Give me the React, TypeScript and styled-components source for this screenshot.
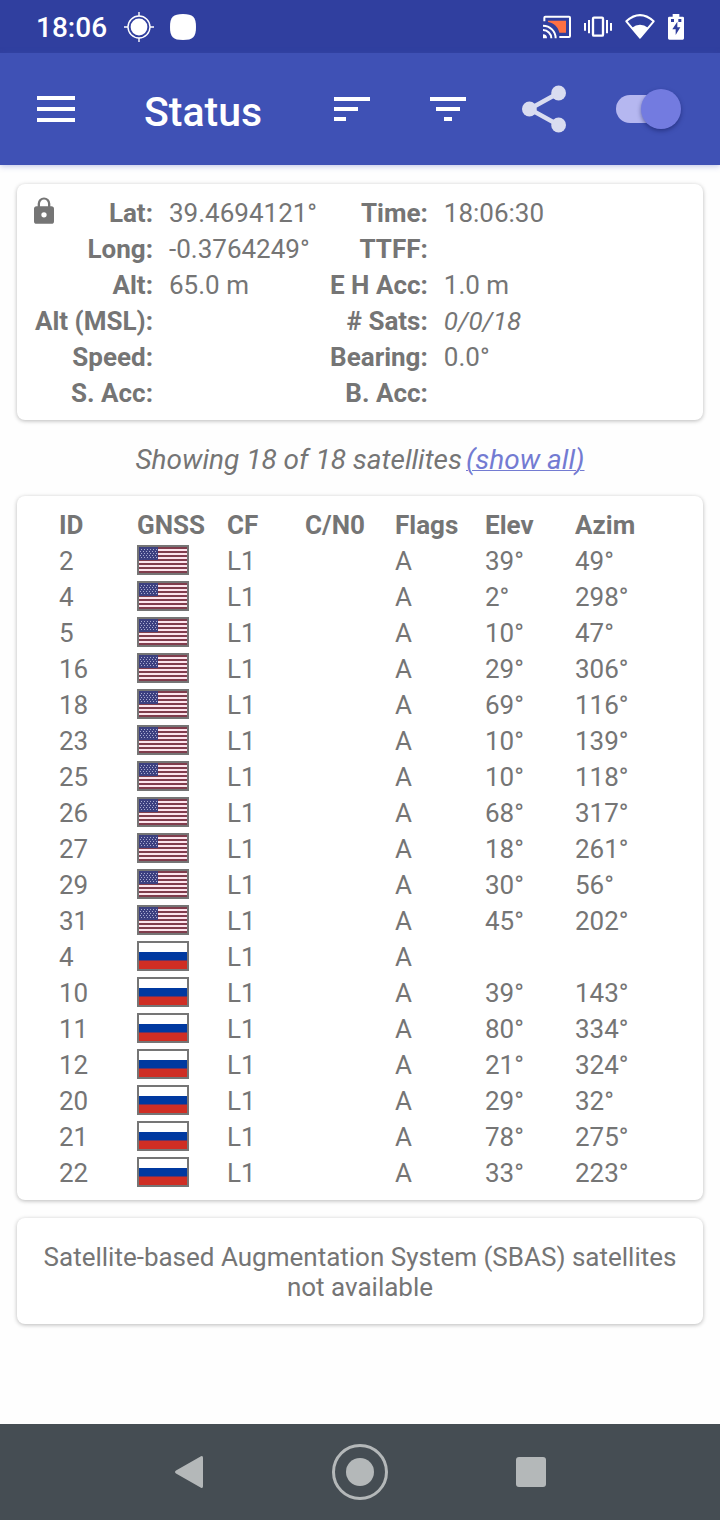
import React from "react";
import styled, { createGlobalStyle } from "styled-components";

const GlobalStyle = createGlobalStyle`
  *, *::before, *::after { box-sizing: border-box; }
  body {
    margin: 0;
    background: #fefefe;
    color: #757575;
    font-family: Roboto, "Liberation Sans", sans-serif;
    font-size: 26px;
    line-height: 36px;
  }
`;

const Screen = styled.div`
  display: flex;
  flex-direction: column;
  min-height: 100vh;
`;

const StatusBar = styled.div`
  display: flex;
  align-items: center;
  gap: 13px;
  height: 53px;
  padding: 0 36px;
  background: #303f9f;
  color: #fff;
`;

const Clock = styled.time`
  padding-top: 2px;
  font-size: 28px;
  font-weight: 500;
  margin-right: 4px;
`;

const Spacer = styled.span`
  flex: 1;
`;

const Toolbar = styled.header`
  display: flex;
  align-items: center;
  height: 112px;
  padding-right: 39px;
  background: #3f51b5;
  color: #fff;
  box-shadow: 0 1px 6px rgba(63, 81, 181, 0.35);
`;

const IconButton = styled.button<{ $width: number }>`
  display: flex;
  align-items: center;
  justify-content: center;
  width: ${(p) => p.$width}px;
  height: 96px;
  padding: 0;
  border: 0;
  background: none;
  color: inherit;
`;

const Title = styled.h1`
  flex: 1;
  margin: 0 0 0 32px;
  padding-top: 5px;
  font-size: 41px;
  font-weight: 500;
  line-height: 48px;
`;

const Switch = styled.input`
  appearance: none;
  position: relative;
  width: 65px;
  height: 40px;
  margin: 0 0 0 24px;

  &::before {
    content: "";
    position: absolute;
    inset: 6px 4px 6px 0;
    border-radius: 14px;
    background: #b5b7f0;
  }
  &::after {
    content: "";
    position: absolute;
    top: 0;
    left: 0;
    width: 40px;
    height: 40px;
    border-radius: 50%;
    background: #737be0;
    box-shadow: 0 2px 4px rgba(20, 25, 90, 0.5);
  }
  &:checked::after {
    left: 25px;
  }
`;

const Main = styled.main`
  flex: 1;
  padding: 19px 17px;
`;

const Card = styled.section`
  border-radius: 8px;
  background: #fff;
  box-shadow: 0 1px 4px rgba(0, 0, 0, 0.28);
`;

const InfoGrid = styled.dl`
  display: grid;
  grid-template-columns: 120px 2fr 102px 3fr;
  grid-auto-rows: 36px;
  margin: 0;
  padding: 11px 16px 9px;
`;

const InfoLabel = styled.dt`
  display: flex;
  justify-content: flex-end;
  font-weight: 700;
  white-space: nowrap;

  svg {
    margin: 2px auto 0 0;
  }
`;

const InfoValue = styled.dd<{ $italic?: boolean }>`
  margin: 0;
  padding-left: 16px;
  font-style: ${(p) => (p.$italic ? "italic" : "normal")};
  white-space: nowrap;
`;

const Summary = styled.p`
  display: flex;
  justify-content: center;
  gap: 4px;
  margin: 22px 0 18px;
  font-size: 28px;
  font-style: italic;
`;

const ShowAll = styled.a`
  color: #737bd2;
  text-decoration-thickness: 1px;
`;

const SatelliteTable = styled.table`
  width: 100%;
  table-layout: fixed;
  border-collapse: collapse;
  line-height: 34px;
`;

const TableCard = styled(Card)`
  padding: 10px 16px 10px 42px;
`;

const Column = styled.col<{ $width?: number }>`
  width: ${(p) => (p.$width ? `${p.$width}px` : "auto")};
`;

const HeadCell = styled.th`
  height: 36px;
  padding: 2px 0 0;
  font-weight: 700;
  text-align: left;
`;

const Cell = styled.td`
  height: 36px;
  padding: 2px 0 0;
`;

const FlagCell = styled(Cell)`
  padding: 0;
`;

const Flag = styled.svg`
  display: block;
  width: 52px;
  height: 30px;
  border: 2px solid #757575;
`;

const Notice = styled(Card)`
  margin-top: 18px;
  padding: 24px 24px 22px;
  line-height: 30px;
  text-align: center;
`;

const NavBar = styled.nav`
  display: flex;
  justify-content: center;
  height: 96px;
  background: #454d53;
  color: #b4b8b9;
`;

function UsFlag() {
  return (
    <Flag viewBox="0 0 48 26" role="img" aria-label="United States">
      <rect width="48" height="26" fill="#fce4ec" />
      {[0, 4, 8, 12, 16, 20, 24].map((y) => (
        <rect key={y} y={y} width="48" height="2" fill="#803c4c" />
      ))}
      <rect width="19" height="13" fill="#3c4080" />
      {[2, 4, 6, 8, 10].map((y) =>
        [2, 5, 8, 11, 14, 17].map((x) => (
          <rect key={`${x}-${y}`} x={x - (y % 4 ? 0 : 1)} y={y} width="1" height="1" fill="#a9abd0" />
        ))
      )}
    </Flag>
  );
}

function RussianFlag() {
  return (
    <Flag viewBox="0 0 48 26" role="img" aria-label="Russia">
      <rect width="48" height="9" fill="#fff" />
      <rect y="9" width="48" height="9" fill="#0039a0" />
      <rect y="17.5" width="48" height="8.500" fill="#cf2e24" />
    </Flag>
  );
}

type Info = [string, string, string, string];
const info: Info[] = [
  ["Lat:", "39.4694121°", "Time:", "18:06:30"],
  ["Long:", "-0.3764249°", "TTFF:", ""],
  ["Alt:", "65.0 m", "E H Acc:", "1.0 m"],
  ["Alt (MSL):", "", "# Sats:", "0/0/18"],
  ["Speed:", "", "Bearing:", "0.0°"],
  ["S. Acc:", "", "B. Acc:", ""],
];

type Satellite = { id: number; country: "us" | "ru"; elev: string; azim: string };
const sat = (country: "us" | "ru", id: number, elev: string, azim: string): Satellite => ({ id, country, elev, azim });
const satellites: Satellite[] = [
  sat("us", 2, "39°", "49°"),
  sat("us", 4, "2°", "298°"),
  sat("us", 5, "10°", "47°"),
  sat("us", 16, "29°", "306°"),
  sat("us", 18, "69°", "116°"),
  sat("us", 23, "10°", "139°"),
  sat("us", 25, "10°", "118°"),
  sat("us", 26, "68°", "317°"),
  sat("us", 27, "18°", "261°"),
  sat("us", 29, "30°", "56°"),
  sat("us", 31, "45°", "202°"),
  sat("ru", 4, "", ""),
  sat("ru", 10, "39°", "143°"),
  sat("ru", 11, "80°", "334°"),
  sat("ru", 12, "21°", "324°"),
  sat("ru", 20, "29°", "32°"),
  sat("ru", 21, "78°", "275°"),
  sat("ru", 22, "33°", "223°"),
];

function LockIcon() {
  return (
    <svg width="22" height="27" viewBox="-3 0 66 80" fill="#757575" aria-label="Location locked">
      <path
        fillRule="evenodd"
        d="M8 27h3V20a19 19 0 0 1 38 0v7h3a8 8 0 0 1 8 8v37a8 8 0 0 1-8 8H8a8 8 0 0 1-8-8V35a8 8 0 0 1 8-8zm10 0h24V20a12 13 0 0 0-24 0zM30 45a8 8 0 1 0 0 16 8 8 0 0 0 0-16z"
      />
    </svg>
  );
}

function StatusIcons() {
  return (
    <>
      <svg width="28" height="26" viewBox="186 40 84 78" fill="none" stroke="#fff" strokeWidth="6">
        <path d="M201 60h54v36h-20c-4-18-16-29-34-32z" fill="#ff7043" stroke="none" />
        <path d="M190 62V51q0-3 3-3h71q3 0 3 3v55q0 3-3 3h-29" />
        <path d="M186 75a38 38 0 0 1 38 38M186 88a25 25 0 0 1 25 25" />
        <path d="M186 101a12 12 0 0 1 12 12h-12z" fill="#fff" stroke="none" />
      </svg>
      <svg width="28" height="26" viewBox="309 40 84 78" fill="#fff">
        <rect x="336" y="51" width="30" height="54" rx="3" fill="none" stroke="#fff" strokeWidth="7" />
        <path d="M309 67h6v23h-6zM321 58h6v40h-6zM375 58h6v40h-6zM387 67h6v23h-6z" />
      </svg>
      <svg width="30" height="26" viewBox="438 40 90 78" fill="#fff">
        <path d="M442 62Q483 25 524 62L483 111z" fill="none" stroke="#fff" strokeWidth="6" strokeLinejoin="round" />
        <path d="M458 82Q483 62 508 82L483 113z" />
      </svg>
      <svg width="16" height="26" viewBox="564 40 48 78" fill="#fff">
        <path d="M578 40h20v8h10q4 0 4 4v61q0 4-4 4h-40q-4 0-4-4V52q0-4 4-4h10z" />
        <path d="M573 55h9v9h-9zM595 55h9v9h-9zM592 63l-15 23h10v17l14-23h-9z" fill="#303f9f" />
      </svg>
    </>
  );
}

export default function App() {
  return (
    <Screen>
      <GlobalStyle />
      <StatusBar>
        <Clock>18:06</Clock>
        <svg width="30" height="30" viewBox="0 0 30 30" fill="none" stroke="#fff" strokeWidth="1.4">
          <circle cx="15" cy="15" r="11" />
          <circle cx="15" cy="15" r="8.4" fill="#fff" stroke="none" />
          <path d="M15 0v4M15 26v4M0 15h4M26 15h4" />
        </svg>
        <svg width="30" height="26" viewBox="-3 0 30 26" fill="#fff">
          <path d="M13 0c10 0 13 3 13 13s-3 13-13 13S0 23 0 13 3 0 13 0z" />
        </svg>
        <Spacer />
        <StatusIcons />
      </StatusBar>

      <Toolbar>
        <IconButton $width={112} aria-label="Menu">
          <svg width="38" height="26" viewBox="0 0 38 26" fill="#fff">
            <path d="M0 0h38v4H0zM0 11h38v4H0zM0 22h38v4H0z" />
          </svg>
        </IconButton>
        <Title>Status</Title>
        <IconButton $width={96} aria-label="Sort">
          <svg width="36" height="24" viewBox="0 0 36 24" fill="#fff">
            <path d="M0 0h36v4H0zM0 10h24v4H0zM0 20h12v4H0z" />
          </svg>
        </IconButton>
        <IconButton $width={96} aria-label="Filter">
          <svg width="36" height="24" viewBox="0 0 36 24" fill="#fff">
            <path d="M0 0h36v4H0zM6 10h24v4H6zM14 20h8v4h-8z" />
          </svg>
        </IconButton>
        <IconButton $width={96} aria-label="Share">
          <svg width="44" height="48" viewBox="0 0 44 48" fill="#d9dcf0">
            <path d="M36.5 8L7.5 24l29 16" fill="none" stroke="#d9dcf0" strokeWidth="4.4" />
            <circle cx="7.4" cy="24" r="7.4" />
            <circle cx="36.6" cy="8" r="7.4" />
            <circle cx="36.6" cy="40" r="7.4" />
          </svg>
        </IconButton>
        <Switch type="checkbox" role="switch" aria-label="GPS" defaultChecked />
      </Toolbar>

      <Main>
        <Card>
          <InfoGrid>
            {info.map(([labelA, valueA, labelB, valueB], i) => (
              <React.Fragment key={labelA}>
                <InfoLabel>
                  {i === 0 && <LockIcon />}
                  {labelA}
                </InfoLabel>
                <InfoValue>{valueA}</InfoValue>
                <InfoLabel>{labelB}</InfoLabel>
                <InfoValue $italic={labelB === "# Sats:"}>{valueB}</InfoValue>
              </React.Fragment>
            ))}
          </InfoGrid>
        </Card>

        <Summary>
          <span>Showing 18 of 18 satellites</span>
          <ShowAll href="#all">(show all)</ShowAll>
        </Summary>

        <TableCard>
          <SatelliteTable>
            <colgroup>
              <Column $width={78} />
              <Column $width={90} />
              <Column $width={78} />
              <Column $width={90} />
              <Column $width={90} />
              <Column $width={90} />
              <Column />
            </colgroup>
            <thead>
              <tr>
                {["ID", "GNSS", "CF", "C/N0", "Flags", "Elev", "Azim"].map((name) => (
                  <HeadCell key={name} scope="col">
                    {name}
                  </HeadCell>
                ))}
              </tr>
            </thead>
            <tbody>
              {satellites.map((s) => (
                <tr key={`${s.country}-${s.id}`}>
                  <Cell>{s.id}</Cell>
                  <FlagCell>{s.country === "us" ? <UsFlag /> : <RussianFlag />}</FlagCell>
                  <Cell>L1</Cell>
                  <Cell />
                  <Cell>A</Cell>
                  <Cell>{s.elev}</Cell>
                  <Cell>{s.azim}</Cell>
                </tr>
              ))}
            </tbody>
          </SatelliteTable>
        </TableCard>

        <Notice>Satellite-based Augmentation System (SBAS) satellites not available</Notice>
      </Main>

      <NavBar>
        <IconButton $width={171} aria-label="Back">
          <svg width="28" height="32" viewBox="0 0 28 32" fill="currentColor">
            <path d="M1 14.6L26 .3q2-.8 2 1.4v28.6q0 2.200-2 1.400L1 17.400q-2-1.400 0-2.800z" />
          </svg>
        </IconButton>
        <IconButton $width={171} aria-label="Home">
          <svg width="56" height="56" viewBox="0 0 56 56" fill="currentColor">
            <circle cx="28" cy="28" r="26.500" fill="none" stroke="currentColor" strokeWidth="3" />
            <circle cx="28" cy="28" r="14" />
          </svg>
        </IconButton>
        <IconButton $width={171} aria-label="Recent apps">
          <svg width="30" height="30" viewBox="0 0 30 30" fill="currentColor">
            <rect width="30" height="30" rx="3" />
          </svg>
        </IconButton>
      </NavBar>
    </Screen>
  );
}
